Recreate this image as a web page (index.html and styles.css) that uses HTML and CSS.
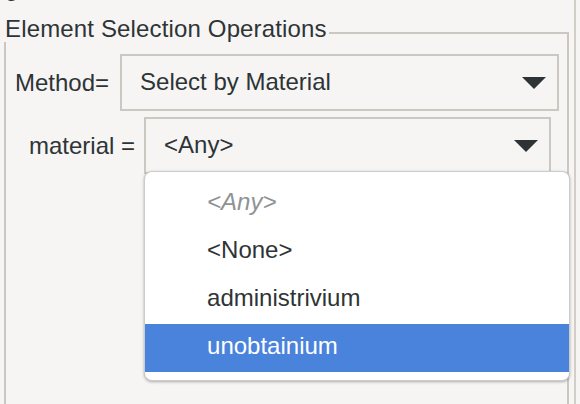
FILE: index.html
```html
<!DOCTYPE html>
<html>
<head>
<meta charset="utf-8">
<link rel="stylesheet" href="styles.css">
</head>
<body>
<div class="panel">
  <div class="prev">g</div>
  <div class="frame">
    <span class="legend">Element Selection Operations</span>
    <div class="row row-method">
      <span class="label">Method=</span>
      <div class="combo">
        <span class="combo-text">Select by Material</span>
        <svg class="arrow" width="24" height="12" viewBox="0 0 24 12"><path d="M0 0H24L12 12Z"/></svg>
      </div>
    </div>
    <div class="row row-material">
      <span class="label">material =</span>
      <div class="combo">
        <span class="combo-text">&lt;Any&gt;</span>
        <svg class="arrow" width="24" height="12" viewBox="0 0 24 12"><path d="M0 0H24L12 12Z"/></svg>
        <ul class="popup">
          <li class="item item-any">&lt;Any&gt;</li>
          <li class="item">&lt;None&gt;</li>
          <li class="item">administrivium</li>
          <li class="item item-selected">unobtainium</li>
        </ul>
      </div>
    </div>
  </div>
</div>
</body>
</html>
```
FILE: styles.css
```css
* { box-sizing: border-box; }
html, body {
  margin: 0;
  padding: 0;
  background: #f6f5f4;
  overflow: hidden;
}
body {
  width: 580px;
  height: 404px;
  font-family: "Liberation Sans", Arial, sans-serif;
  font-size: 24px;
  color: #2e3436;
}
.panel {
  width: 576px;
  height: 404px;
  border-right: 2px solid #d3cdc8;
  overflow: hidden;
}
.prev {
  height: 28px;
  line-height: 28px;
  margin-top: -26px;
  padding-left: 5px;
}
.frame {
  position: relative;
  margin: 30px 5px 0 4px;
  height: 420px;
  border: 2px solid #cdc7c2;
  border-bottom: none;
  padding: 20px 8px 0 0;
}
.legend {
  position: absolute;
  top: -18px;
  left: -2px;
  line-height: 26px;
  padding: 0 2px 0 1px;
  background: #f6f5f4;
  letter-spacing: 0.15px;
}
.row {
  display: flex;
  align-items: center;
}
.row-method {
  padding-left: 9px;
  gap: 11px;
}
.row-material {
  margin-top: 6px;
  padding-left: 23px;
  padding-right: 8px;
  gap: 9px;
}
.label {
  white-space: nowrap;
}
.combo {
  position: relative;
  flex: 1;
  height: 57px;
  border: 2px solid #cdc7c2;
  padding: 0 11px 0 18px;
  display: flex;
  align-items: center;
  justify-content: space-between;
}
.combo-text {
  padding-bottom: 2px;
}
.arrow {
  display: block;
  fill: #2e3436;
  margin-top: 1px;
}
.popup {
  position: absolute;
  top: 52px;
  left: -2px;
  width: 426px;
  margin: 0;
  padding: 8px 0;
  list-style: none;
  background: #ffffff;
  border: 1px solid rgba(0, 0, 0, 0.2);
  border-radius: 8px;
  box-shadow: 0 1px 3px rgba(0, 0, 0, 0.3);
}
.item {
  height: 48px;
  line-height: 44px;
  padding: 0 0 4px 62px;
  color: #2e3436;
}
.item-any {
  font-style: italic;
  color: #8f9293;
}
.item-selected {
  background: #4a83dc;
  color: #ffffff;
}
```
